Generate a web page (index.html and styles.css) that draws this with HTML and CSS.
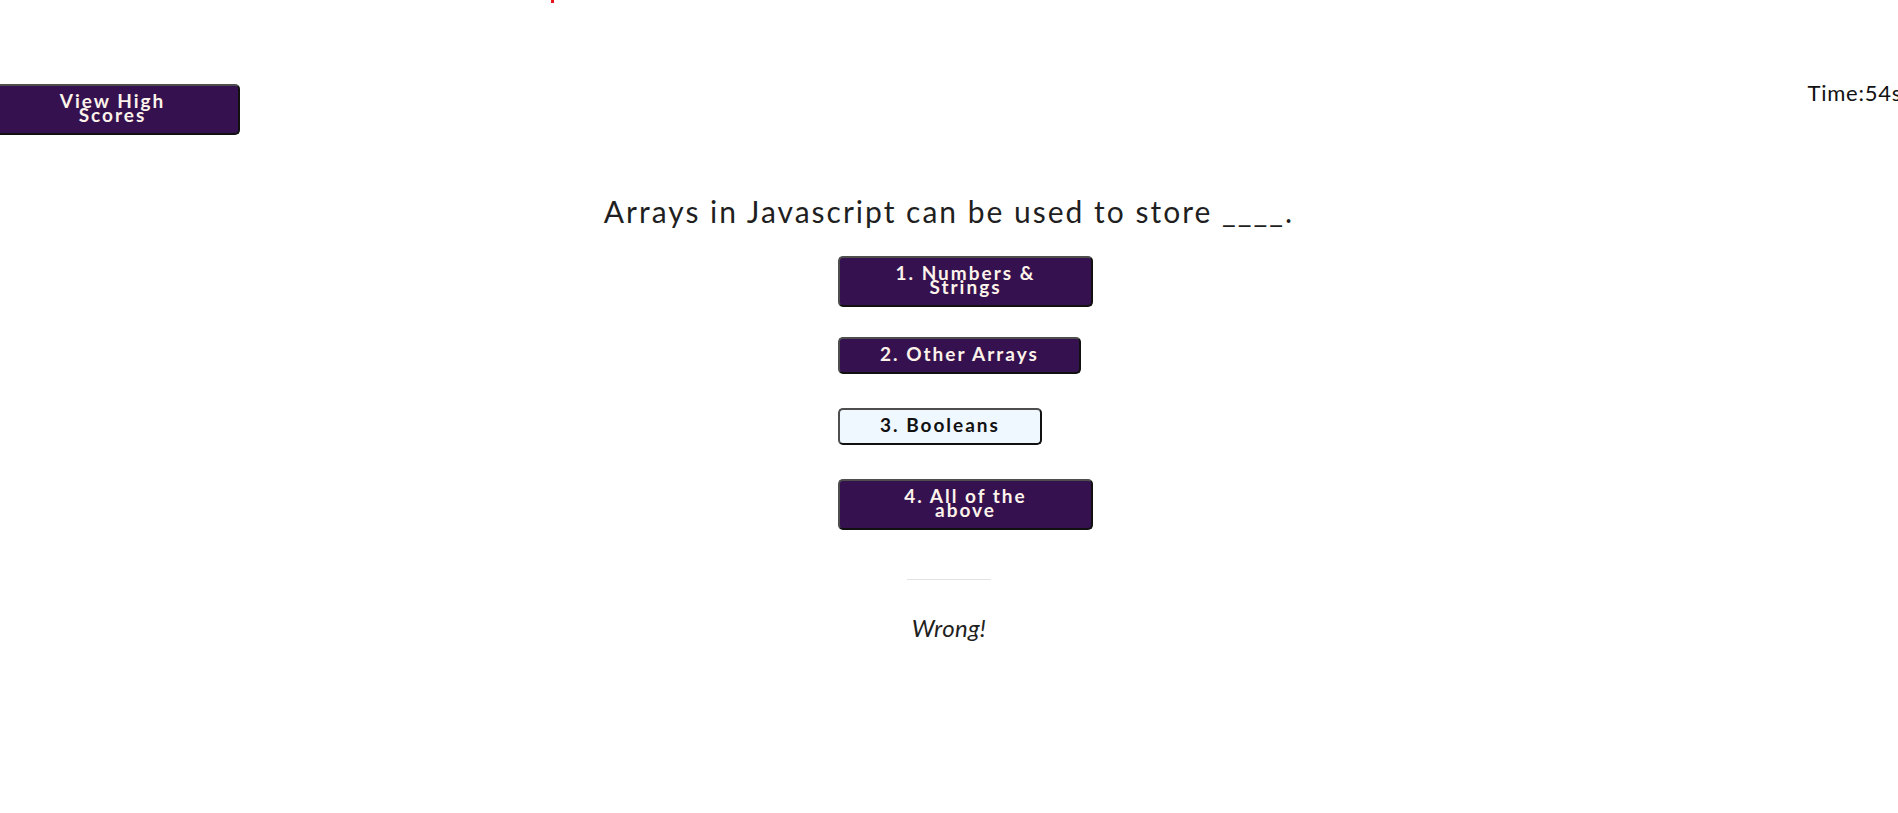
FILE: index.html
```html
<!DOCTYPE html>
<html lang="en">
<head>
<meta charset="utf-8">
<title>Code Quiz</title>
<link rel="stylesheet" href="styles.css">
</head>
<body>
<span class="dot"></span>
<header class="topbar">
  <button class="btn btn-scores">View High Scores</button>
  <div class="timer">Time:54s</div>
</header>
<main class="quiz">
  <h2 class="question">Arrays in Javascript can be used to store ____.</h2>
  <div class="choices">
    <button class="btn choice tall">1. Numbers &amp; Strings</button>
    <button class="btn choice">2. Other Arrays</button>
    <button class="btn choice selected">3. Booleans</button>
    <button class="btn choice">4. All of the above</button>
  </div>
  <hr class="divider">
  <p class="result">Wrong!</p>
</main>
</body>
</html>
```

FILE: styles.css
```css
html, body {
  margin: 0;
  padding: 0;
  overflow: hidden;
  background: #ffffff;
}

body {
  font-family: Lato, "Noto Sans", sans-serif;
  color: #1d1d1f;
  position: relative;
  min-height: 813px;
}

.dot {
  position: absolute;
  left: 551px;
  top: 0;
  width: 3px;
  height: 3px;
  background: #e8141b;
}

.btn {
  box-sizing: border-box;
  width: max-content;
  max-width: 255px;
  padding: 8px 40px 11px 40px;
  border: 2px solid;
  border-color: #4e4e4e #111111 #111111 #4e4e4e;
  border-radius: 5px;
  background: #351150;
  color: #fdf3ea;
  font-family: Lato, "Noto Sans", sans-serif;
  font-weight: 700;
  font-size: 19px;
  letter-spacing: 2px;
  line-height: 14px;
  text-align: center;
  cursor: pointer;
}

.btn.selected {
  background: #eff7ff;
  color: #111111;
}

.topbar {
  display: flex;
  justify-content: space-between;
  align-items: flex-start;
  padding-top: 84px;
}

.btn-scores {
  width: 255px;
  margin-left: -15px;
}

.timer {
  margin-top: -5px;
  margin-right: -4px;
  font-size: 22px;
  letter-spacing: 0.75px;
  color: #111111;
}

.quiz {
  display: flex;
  flex-direction: column;
  align-items: center;
}

.question {
  margin: 58px 0 0;
  font-size: 30px;
  font-weight: 400;
  line-height: 36px;
  color: #1f1f22;
  letter-spacing: 2px;
}

.choices {
  box-sizing: border-box;
  width: 222px;
  margin-top: 27px;
  display: flex;
  flex-direction: column;
  align-items: flex-start;
  gap: 34px;
}

.choice.tall {
  margin-bottom: -4px;
}

.divider {
  width: 84px;
  margin: 49px 0 0;
  border: 0;
  border-top: 1px solid #e3e3e3;
}

.result {
  margin: 33px 0 0;
  font-size: 24px;
  font-style: italic;
  letter-spacing: 0.3px;
  line-height: 29px;
  color: #1f1f22;
}
```
